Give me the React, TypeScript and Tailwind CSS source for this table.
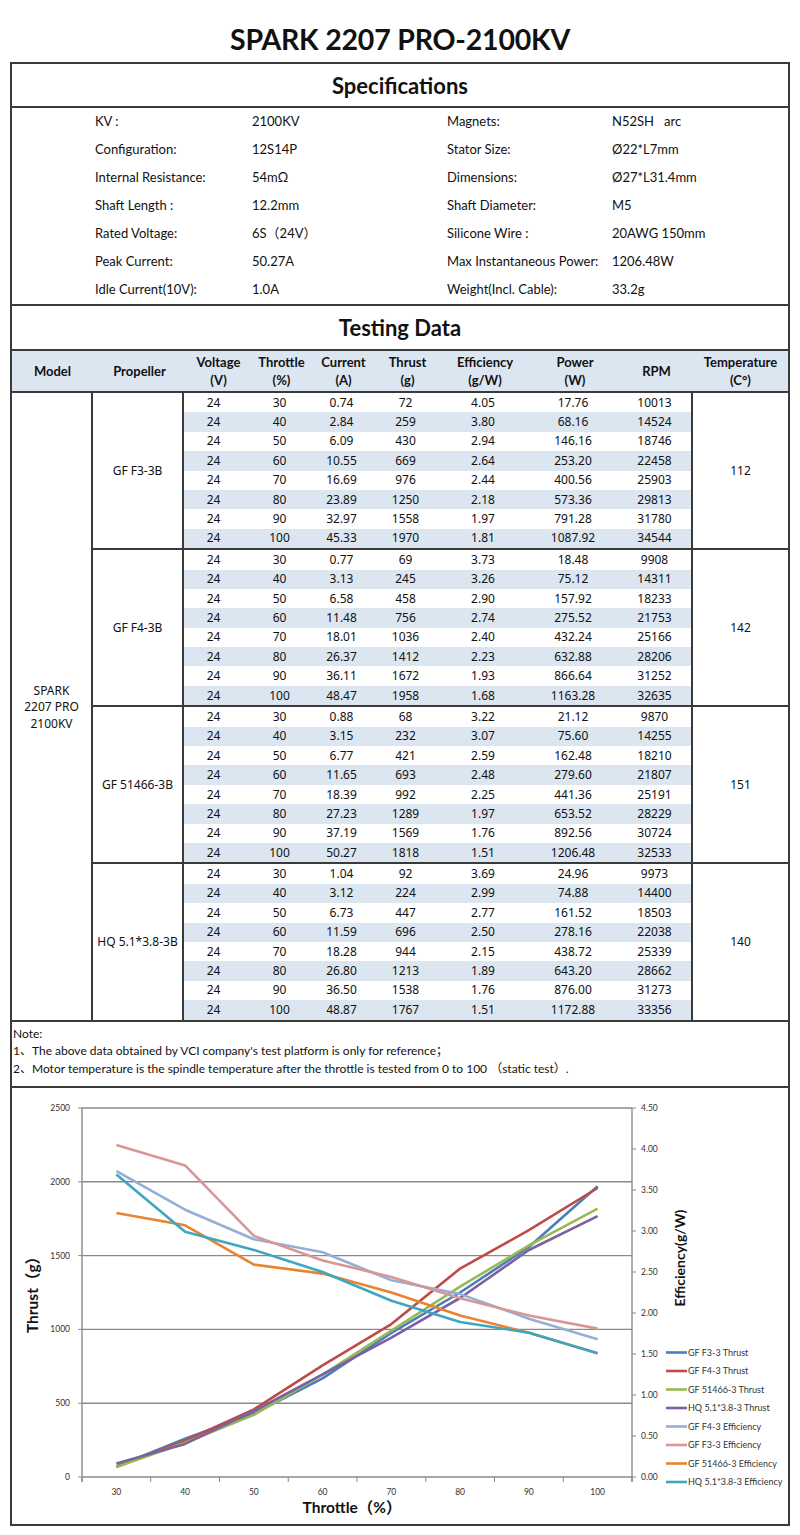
import React from "react";

const specs: [string, string, string, string][] = [
  ["KV :", "2100KV", "Magnets:", "N52SH   arc"],
  ["Configuration:", "12S14P", "Stator Size:", "Ø22*L7mm"],
  ["Internal Resistance:", "54mΩ", "Dimensions:", "Ø27*L31.4mm"],
  ["Shaft Length :", "12.2mm", "Shaft Diameter:", "M5"],
  ["Rated Voltage:", "6S（24V）", "Silicone Wire :", "20AWG 150mm"],
  ["Peak Current:", "50.27A", "Max Instantaneous Power:", "1206.48W"],
  ["Idle Current(10V):", "1.0A", "Weight(Incl. Cable):", "33.2g"],
];

type Group = { prop: string; temp: string; rows: string[][] };

const groups: Group[] = [
  {
    prop: "GF F3-3B",
    temp: "112",
    rows: [
      ["24", "30", "0.74", "72", "4.05", "17.76", "10013"],
      ["24", "40", "2.84", "259", "3.80", "68.16", "14524"],
      ["24", "50", "6.09", "430", "2.94", "146.16", "18746"],
      ["24", "60", "10.55", "669", "2.64", "253.20", "22458"],
      ["24", "70", "16.69", "976", "2.44", "400.56", "25903"],
      ["24", "80", "23.89", "1250", "2.18", "573.36", "29813"],
      ["24", "90", "32.97", "1558", "1.97", "791.28", "31780"],
      ["24", "100", "45.33", "1970", "1.81", "1087.92", "34544"],
    ],
  },
  {
    prop: "GF F4-3B",
    temp: "142",
    rows: [
      ["24", "30", "0.77", "69", "3.73", "18.48", "9908"],
      ["24", "40", "3.13", "245", "3.26", "75.12", "14311"],
      ["24", "50", "6.58", "458", "2.90", "157.92", "18233"],
      ["24", "60", "11.48", "756", "2.74", "275.52", "21753"],
      ["24", "70", "18.01", "1036", "2.40", "432.24", "25166"],
      ["24", "80", "26.37", "1412", "2.23", "632.88", "28206"],
      ["24", "90", "36.11", "1672", "1.93", "866.64", "31252"],
      ["24", "100", "48.47", "1958", "1.68", "1163.28", "32635"],
    ],
  },
  {
    prop: "GF 51466-3B",
    temp: "151",
    rows: [
      ["24", "30", "0.88", "68", "3.22", "21.12", "9870"],
      ["24", "40", "3.15", "232", "3.07", "75.60", "14255"],
      ["24", "50", "6.77", "421", "2.59", "162.48", "18210"],
      ["24", "60", "11.65", "693", "2.48", "279.60", "21807"],
      ["24", "70", "18.39", "992", "2.25", "441.36", "25191"],
      ["24", "80", "27.23", "1289", "1.97", "653.52", "28229"],
      ["24", "90", "37.19", "1569", "1.76", "892.56", "30724"],
      ["24", "100", "50.27", "1818", "1.51", "1206.48", "32533"],
    ],
  },
  {
    prop: "HQ 5.1*3.8-3B",
    temp: "140",
    rows: [
      ["24", "30", "1.04", "92", "3.69", "24.96", "9973"],
      ["24", "40", "3.12", "224", "2.99", "74.88", "14400"],
      ["24", "50", "6.73", "447", "2.77", "161.52", "18503"],
      ["24", "60", "11.59", "696", "2.50", "278.16", "22038"],
      ["24", "70", "18.28", "944", "2.15", "438.72", "25339"],
      ["24", "80", "26.80", "1213", "1.89", "643.20", "28662"],
      ["24", "90", "36.50", "1538", "1.76", "876.00", "31273"],
      ["24", "100", "48.87", "1767", "1.51", "1172.88", "33356"],
    ],
  },
];

const colW = ["w-[65px]", "w-[61px]", "w-[63px]", "w-[65px]", "w-[90px]", "w-[90px]", "w-[73px]"];

const headFont = { fontFamily: "Lato, 'Noto Sans CJK SC', sans-serif" };
const dataFont = { fontFamily: "'Noto Sans', 'Noto Sans CJK SC', sans-serif" };

function Chart() {
  const x0 = 82;
  const x1 = 632;
  const yTop = 1108;
  const yBot = 1477;
  const step = (x1 - x0) / 8;
  const xc = (i: number) => x0 + step * (i + 0.5);
  const yL = (v: number) => yBot - (v / 2500) * (yBot - yTop);
  const yR = (v: number) => yBot - (v / 4.5) * (yBot - yTop);
  const pts = (vals: number[], f: (v: number) => number) =>
    vals.map((v, i) => `${xc(i).toFixed(1)},${f(v).toFixed(1)}`).join(" ");

  const thrust = [
    { name: "GF F3-3 Thrust", color: "#4a7ebb", vals: groups[0].rows.map((r) => +r[3]) },
    { name: "GF F4-3 Thrust", color: "#be4b48", vals: groups[1].rows.map((r) => +r[3]) },
    { name: "GF 51466-3 Thrust", color: "#98b954", vals: groups[2].rows.map((r) => +r[3]) },
    { name: "HQ 5.1*3.8-3 Thrust", color: "#7d60a0", vals: groups[3].rows.map((r) => +r[3]) },
  ];
  const eff = [
    { name: "GF F4-3 Efficiency", color: "#95afd6", vals: groups[1].rows.map((r) => +r[4]) },
    { name: "GF F3-3 Efficiency", color: "#d99694", vals: groups[0].rows.map((r) => +r[4]) },
    { name: "GF 51466-3 Efficiency", color: "#e8842f", vals: groups[2].rows.map((r) => +r[4]) },
    { name: "HQ 5.1*3.8-3 Efficiency", color: "#3ea6bf", vals: groups[3].rows.map((r) => +r[4]) },
  ];
  const legend = [...thrust, ...eff];
  const cats = ["30", "40", "50", "60", "70", "80", "90", "100"];
  const font = "Lato, 'Noto Sans CJK SC', sans-serif";

  return (
    <svg width={776} height={436} className="block">
      <g transform="translate(-12,-1088)" fontFamily={font}>
        {[0, 500, 1000, 1500, 2000, 2500].map((v) => (
          <g key={v}>
            {v > 0 && (
              <line x1={x0} x2={x1} y1={yL(v)} y2={yL(v)} stroke="#8a8a8a" strokeWidth={1.4} />
            )}
            <line x1={x0 - 4} x2={x0} y1={yL(v)} y2={yL(v)} stroke="#8a8a8a" strokeWidth={1} />
            <text x={70} y={yL(v) + 3} fontSize={8.5} textAnchor="end" fill="#333">
              {v}
            </text>
          </g>
        ))}
        <line x1={x0} x2={x0} y1={yTop} y2={yBot + 5} stroke="#8a8a8a" strokeWidth={1.4} />
        <line x1={x1} x2={x1} y1={yTop} y2={yBot + 5} stroke="#8a8a8a" strokeWidth={1.4} />
        <line x1={x0} x2={x1} y1={yBot} y2={yBot} stroke="#8a8a8a" strokeWidth={1.4} />
        {Array.from({ length: 9 }).map((_, i) => (
          <line key={i} x1={x0 + step * i} x2={x0 + step * i} y1={yBot} y2={yBot + 5} stroke="#8a8a8a" strokeWidth={1} />
        ))}
        {cats.map((c, i) => (
          <text key={c} x={xc(i)} y={yBot + 18} fontSize={8.5} textAnchor="middle" fill="#333">
            {c}
          </text>
        ))}
        {["0.00", "0.50", "1.00", "1.50", "2.00", "2.50", "3.00", "3.50", "4.00", "4.50"].map((t, i) => (
          <g key={t}>
            <line x1={x1} x2={x1 + 4} y1={yR(i * 0.5)} y2={yR(i * 0.5)} stroke="#8a8a8a" strokeWidth={1} />
            <text x={641} y={yR(i * 0.5) + 3} fontSize={8.5} fill="#333">
              {t}
            </text>
          </g>
        ))}
        {thrust.map((s) => (
          <polyline key={s.name} points={pts(s.vals, yL)} fill="none" stroke={s.color} strokeWidth={2.6} strokeLinejoin="round" />
        ))}
        {eff.map((s) => (
          <polyline key={s.name} points={pts(s.vals, yR)} fill="none" stroke={s.color} strokeWidth={2.6} strokeLinejoin="round" />
        ))}
        <text
          transform="translate(38,1291) rotate(-90)"
          fontSize={15.5}
          fontWeight={700}
          textAnchor="middle"
          fill="#111"
        >
          Thrust（g）
        </text>
        <text
          transform="translate(685,1258) rotate(-90)"
          fontSize={14}
          fontWeight={700}
          textAnchor="middle"
          fill="#111"
        >
          Efficiency(g/W)
        </text>
        <text x={352} y={1513} fontSize={15.5} fontWeight={700} textAnchor="middle" fill="#111">
          Throttle（%）
        </text>
        {legend.map((s, i) => {
          const y = 1352.5 + i * 18.5;
          return (
            <g key={s.name}>
              <line x1={666} x2={687} y1={y} y2={y} stroke={s.color} strokeWidth={2.6} />
              <text x={688} y={y + 3} fontSize={9} fill="#333">
                {s.name}
              </text>
            </g>
          );
        })}
      </g>
    </svg>
  );
}

export default function App() {
  return (
    <div className="w-[800px] bg-white text-black pb-[9px]">
      <div className="h-[62px] flex items-end justify-center pb-[9px]">
        <div className="text-[28.5px] font-bold leading-none tracking-[-0.2px] text-[#111]" style={headFont}>
          SPARK 2207 PRO-2100KV
        </div>
      </div>
      <div className="mx-[10px] border-2 border-[#3a3a3a]">
        {/* Specifications title */}
        <div className="h-[44px] flex items-center justify-center border-b-2 border-[#3a3a3a]">
          <div className="text-[22px] font-bold text-[#111]" style={headFont}>
            Specifications
          </div>
        </div>
        {/* Spec rows */}
        <div className="pl-[83px] text-[13px] text-[#111]" style={headFont}>
          {specs.map((r, i) => (
            <div key={i} className="h-[28px] flex items-center whitespace-pre">
              <div className="w-[157px]">{r[0]}</div>
              <div className="w-[195px]">{r[1]}</div>
              <div className="w-[165px]">{r[2]}</div>
              <div>{r[3]}</div>
            </div>
          ))}
        </div>
        {/* Testing data title */}
        <div className="h-[47px] flex items-center justify-center border-t-2 border-b-2 border-[#3a3a3a]">
          <div className="text-[22px] font-bold text-[#111]" style={headFont}>
            Testing Data
          </div>
        </div>
        {/* Header */}
        <div
          className="h-[42px] flex items-center bg-[#dce6f1] border-b-2 border-[#3a3a3a] text-[13px] font-bold leading-[18px] text-[#111] text-center"
          style={headFont}
        >
          <div className="w-[81px]">Model</div>
          <div className="w-[93px]">Propeller</div>
          <div className="w-[65px]">Voltage<br />(V)</div>
          <div className="w-[61px]">Throttle<br />(%)</div>
          <div className="w-[63px]">Current<br />(A)</div>
          <div className="w-[65px]">Thrust<br />(g)</div>
          <div className="w-[90px]">Efficiency<br />(g/W)</div>
          <div className="w-[90px]">Power<br />(W)</div>
          <div className="w-[73px]">RPM</div>
          <div className="flex-1">Temperature<br />(C°)</div>
        </div>
        {/* Data */}
        <div className="flex text-[12px] text-[#111]" style={dataFont}>
          <div className="w-[81px] border-r-2 border-[#3a3a3a] flex items-center justify-center text-center leading-[16.5px] pt-[2px]">
            SPARK<br />2207 PRO<br />2100KV
          </div>
          <div className="flex-1 flex flex-col">
            {groups.map((g, gi) => (
              <div key={gi} className={`flex ${gi > 0 ? "border-t-2 border-[#3a3a3a]" : ""}`}>
                <div className="w-[91px] border-r-2 border-[#3a3a3a] flex items-center justify-center">
                  {g.prop}
                </div>
                <div className="w-[509px] border-r-2 border-[#3a3a3a] flex flex-col">
                  {g.rows.map((r, ri) => (
                    <div key={ri} className={`h-[19.4px] flex items-center text-center ${ri % 2 === 1 ? "bg-[#dce6f1]" : ""}`}>
                      {r.map((c, ci) => (
                        <div key={ci} className={`${colW[ci]} ${ci === 0 ? "pr-[6px]" : ""}`}>
                          {c}
                        </div>
                      ))}
                    </div>
                  ))}
                </div>
                <div className="flex-1 flex items-center justify-center">{g.temp}</div>
              </div>
            ))}
          </div>
        </div>
        {/* Note */}
        <div className="border-t-2 border-[#3a3a3a] h-[66px] pl-[1px] pt-[3px] text-[12px] leading-[17.5px] text-[#111]" style={headFont}>
          <div>Note:</div>
          <div>1、The above data obtained by VCI company&apos;s test platform is only for reference；</div>
          <div>2、Motor temperature is the spindle temperature after the throttle is tested from 0 to 100 （static test）.</div>
        </div>
        {/* Chart */}
        <div className="border-t-2 border-[#3a3a3a]">
          <Chart />
        </div>
      </div>
    </div>
  );
}
